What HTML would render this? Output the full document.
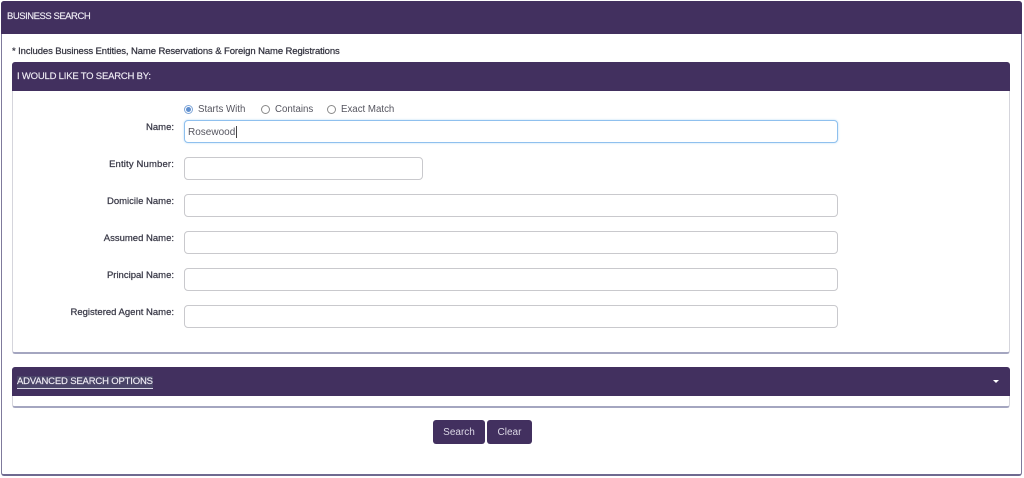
<!DOCTYPE html>
<html><head><meta charset="utf-8"><style>
html,body{margin:0;padding:0;background:#fff;width:1024px;height:478px;overflow:hidden}
body{position:relative;font-family:"Liberation Sans",sans-serif;font-size:10px;color:#3c3c4a;filter:blur(.3px)}
div,span{position:absolute;box-sizing:border-box;white-space:nowrap}
.box{background:#fff;border-radius:3px}
.bar{background:#42305f}
.w{color:#f0edf5;line-height:14px;font-size:9.5px;-webkit-text-stroke:.15px #f0edf5}
.l{right:850px;text-align:right;line-height:14px;color:#3a3a48;font-size:9.5px;-webkit-text-stroke:.25px #3a3a48}
.i{left:184px;width:654px;height:23px;border:1px solid #c9c9cd;border-radius:4px;background:#fff}
.b{background:#42305f;color:#dcd8e6;border-radius:3px;height:24px;line-height:24px;text-align:center;top:420px;padding-top:1px}
.r{width:9px;height:9px;border-radius:50%;border:1px solid #8a8a8a;top:105px;background:#fff}
.t{top:103px;line-height:14px;color:#55555f;font-size:9.7px}
</style></head><body>
<div class="box" style="left:1px;top:1px;width:1021px;height:475px;border:1px solid #7f7a9c;border-bottom:2px solid #6f6a90"></div>
<div class="bar" style="left:1px;top:1px;width:1021px;height:33px;border-radius:3px 3px 0 0"></div>
<span class="w" style="left:7px;top:10px;letter-spacing:-.47px">BUSINESS SEARCH</span>
<span style="left:12px;top:45px;line-height:14px;color:#33333f;font-size:9.5px;letter-spacing:-.1px;-webkit-text-stroke:.25px #33333f">* Includes Business Entities, Name Reservations &amp; Foreign Name Registrations</span>

<div class="box" style="left:12px;top:62px;width:998px;height:292px;border:1px solid #d5d5dc;border-bottom:2px solid #a4a6c0"></div>
<div class="bar" style="left:12px;top:62px;width:998px;height:29px;border-radius:3px 3px 0 0"></div>
<span class="w" style="left:17px;top:70px;letter-spacing:-.2px">I WOULD LIKE TO SEARCH BY:</span>

<div class="r" style="left:184px;border-color:#7fa6d8"></div>
<div style="left:186px;top:107px;width:5px;height:5px;border-radius:50%;background:#5f8fcf"></div>
<span class="t" style="left:198px">Starts With</span>
<div class="r" style="left:261px"></div>
<span class="t" style="left:275px">Contains</span>
<div class="r" style="left:327px"></div>
<span class="t" style="left:341px">Exact Match</span>

<span class="l" style="top:121px">Name:</span>
<div class="i" style="top:120px;border-color:#8fc0ee;box-shadow:0 0 2px #bcdcf7"></div>
<span style="left:188px;top:126px;line-height:14px;color:#55555f">Rosewood</span>
<div style="left:236px;top:126px;width:1px;height:12px;background:#444"></div>

<span class="l" style="top:158px;letter-spacing:.15px">Entity Number:</span>
<div class="i" style="top:157px;width:239px"></div>
<span class="l" style="top:195px">Domicile Name:</span>
<div class="i" style="top:194px"></div>
<span class="l" style="top:232px">Assumed Name:</span>
<div class="i" style="top:231px"></div>
<span class="l" style="top:269px">Principal Name:</span>
<div class="i" style="top:268px"></div>
<span class="l" style="top:306px">Registered Agent Name:</span>
<div class="i" style="top:305px"></div>

<div class="box" style="left:12px;top:367px;width:998px;height:41px;border:1px solid #d5d5dc;border-bottom:2px solid #a4a6c0"></div>
<div class="bar" style="left:12px;top:367px;width:998px;height:29px;border-radius:3px 3px 0 0"></div>
<span class="w" style="left:17px;top:376px;letter-spacing:-.17px;background:#4a4468;border-bottom:1px solid #d8d8e4;line-height:12px;height:13px">ADVANCED SEARCH OPTIONS</span>
<div style="left:993px;top:380px;width:0;height:0;border-left:3px solid transparent;border-right:3px solid transparent;border-top:3px solid #fff"></div>

<div class="b" style="left:433px;width:52px">Search</div>
<div class="b" style="left:487px;width:45px">Clear</div>
</body></html>
